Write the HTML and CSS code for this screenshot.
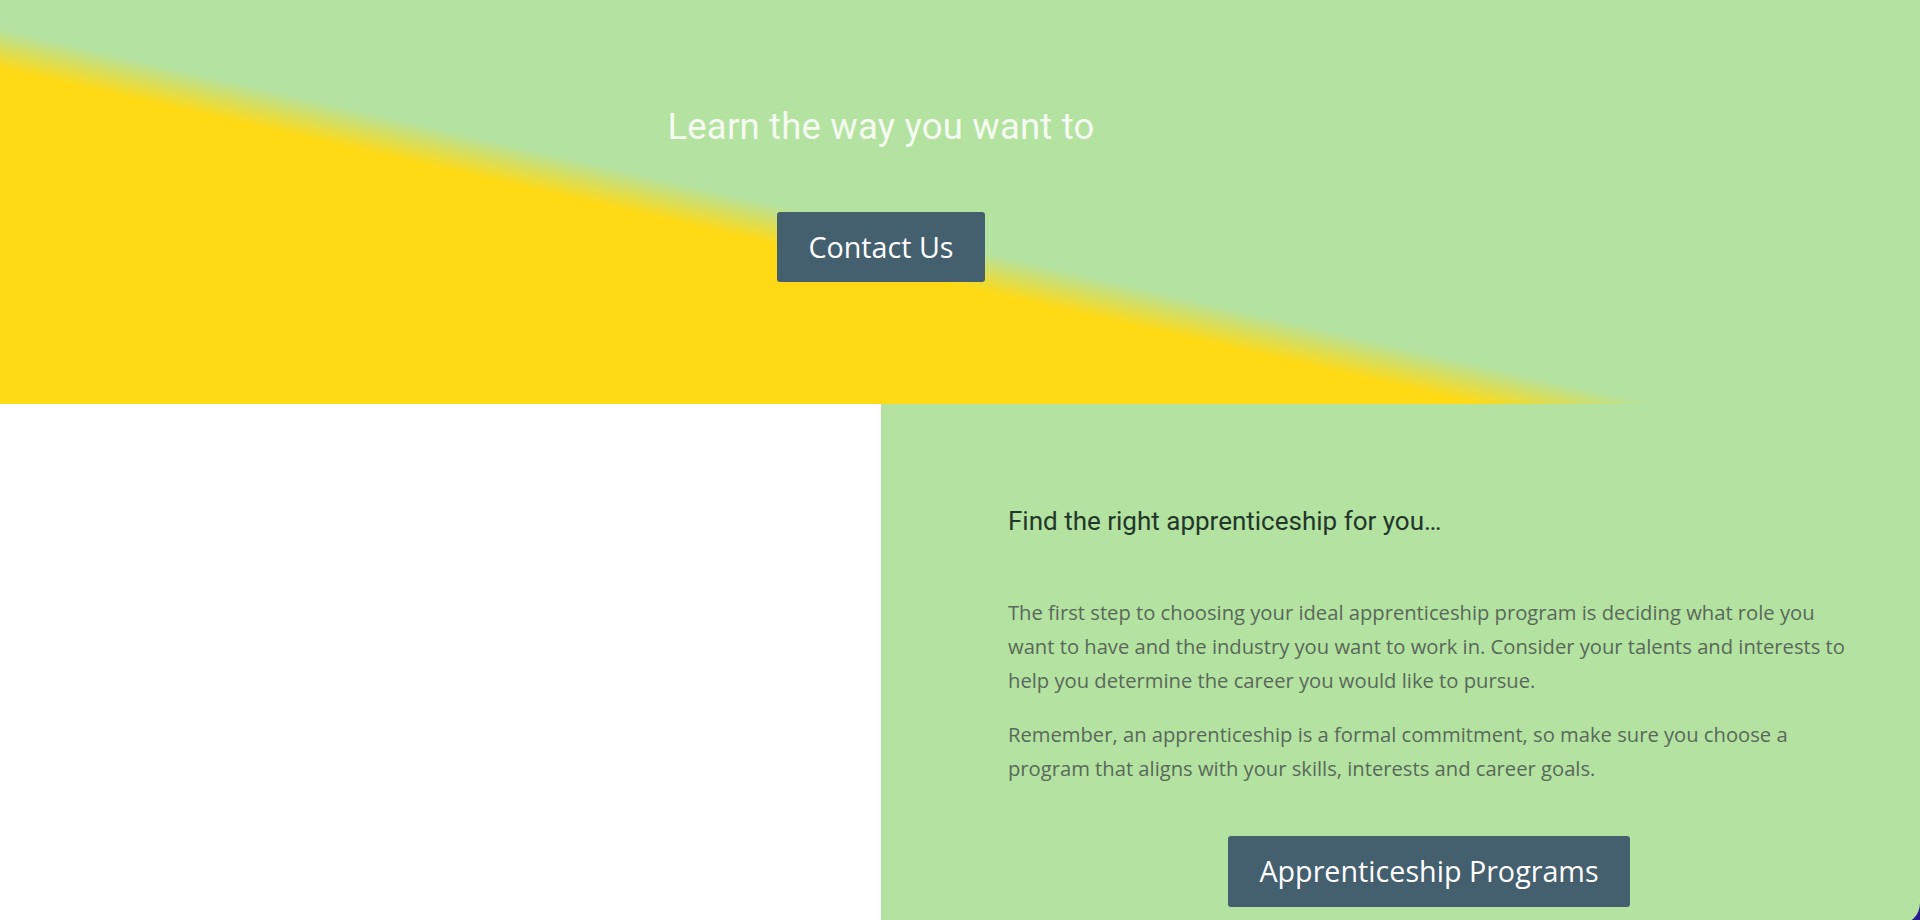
FILE: index.html
```html
<!DOCTYPE html>
<html lang="en">
<head>
<meta charset="utf-8">
<title>Learn the way you want to</title>
<link rel="stylesheet" href="styles.css">
</head>
<body>
<section class="hero">
  <div class="hero-inner">
    <h1 class="hero-title">Learn the way you want to</h1>
    <a class="btn btn-contact" href="#">Contact Us</a>
  </div>
</section>
<section class="split">
  <div class="split-left"></div>
  <div class="split-right">
    <div class="split-content">
      <h2 class="split-heading">Find the right apprenticeship for you…</h2>
      <p class="split-text">The first step to choosing your ideal apprenticeship program is deciding what role you want to have and the industry you want to work in. Consider your talents and interests to help you determine the career you would like to pursue.</p>
      <p class="split-text">Remember, an apprenticeship is a formal commitment, so make sure you choose a program that aligns with your skills, interests and career goals.</p>
      <div class="split-actions">
        <a class="btn btn-programs" href="#">Apprenticeship Programs</a>
      </div>
    </div>
  </div>
</section>
</body>
</html>
```

FILE: styles.css
```css
html {
  overflow: hidden;
}

body {
  margin: 0;
  background: #ffffff;
  font-family: "Open Sans", "Liberation Sans", sans-serif;
}

.hero {
  height: 404px;
  box-sizing: border-box;
  padding: 105px 158px 0 0;
  background: linear-gradient(192.8deg, #b4e2a1 0%, #b4e2a1 55.3%, #ffd914 60.1%, #ffd914 100%);
}

.hero-inner {
  display: flex;
  flex-direction: column;
  align-items: center;
}

.hero-title {
  margin: 0;
  font-family: Roboto, "Liberation Sans", sans-serif;
  font-weight: 400;
  font-size: 36.5px;
  line-height: 43px;
  color: #f5fbf1;
  letter-spacing: 0.2px;
}

.btn {
  display: inline-block;
  box-sizing: border-box;
  background: #44606f;
  color: #ffffff;
  text-decoration: none;
  font-family: "Open Sans", "Liberation Sans", sans-serif;
  font-size: 28.7px;
  line-height: 38px;
  border-radius: 3px;
  padding: 16px 31px;
}

.btn-contact {
  margin-top: 64px;
  height: 70px;
}

.btn-programs {
  height: 71px;
  padding-top: 16px;
}

.split {
  display: flex;
  height: 521px;
  background: #2b1a8c;
}

.split-left {
  width: 881px;
  flex: none;
  background: #ffffff;
}

.split-right {
  flex: 1;
  background: #b4e2a1;
  border-bottom-right-radius: 22px;
  padding: 102px 58px 0 127px;
}

.split-heading {
  margin: 0 0 58px;
  font-family: Roboto, "Liberation Sans", sans-serif;
  font-weight: 400;
  font-size: 26px;
  line-height: 31px;
  color: #213729;
}

.split-text {
  margin: 0 0 20px;
  font-size: 20.2px;
  line-height: 34px;
  color: #58695a;
}

.split-actions {
  display: flex;
  justify-content: center;
  padding: 31px 12px 0 0;
}
```
